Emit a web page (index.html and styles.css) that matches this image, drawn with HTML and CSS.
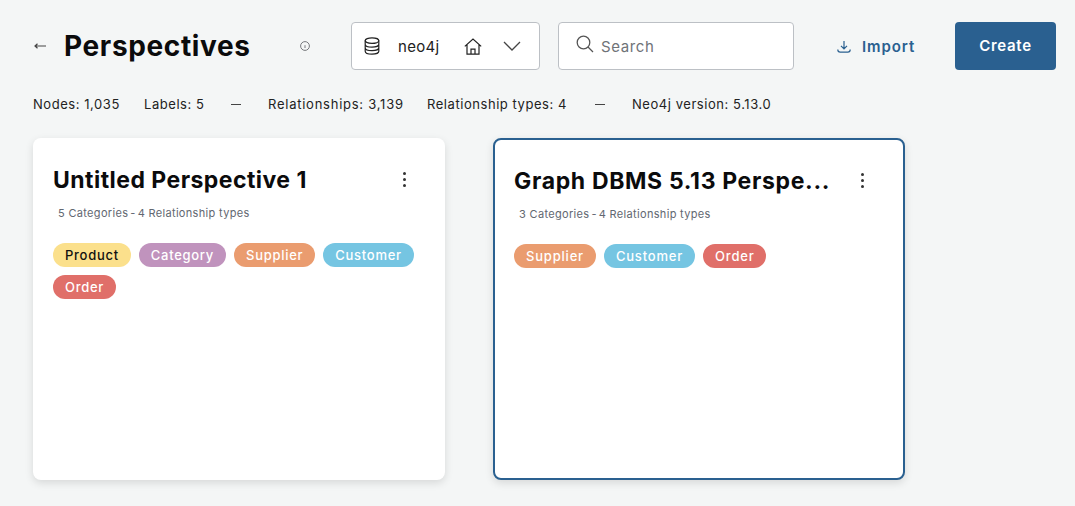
FILE: index.html
```html
<!DOCTYPE html>
<html lang="en">
<head>
  <meta charset="UTF-8">
  <title>Perspectives</title>
  <link rel="stylesheet" href="styles.css">
</head>
<body>
  <header class="topbar">
    <span class="back">
      <svg width="12" height="8" viewBox="0 0 12 8" fill="none" stroke="#444" stroke-width="1.200"><path d="M12 4H1M3.500 1.700 1 4l2.500 2.300"/></svg>
    </span>
    <h1 class="page-title">Perspectives</h1>
    <span class="info">
      <svg width="10" height="10" viewBox="0 0 10 10" fill="none" stroke="#77797d"><circle cx="5" cy="5" r="4.400"/><path d="M5 4.200v2.800"/></svg>
    </span>
    <div class="db-select">
      <svg width="16" height="18" viewBox="0 0 16 18" fill="none" stroke="#222" stroke-width="1.200"><ellipse cx="8" cy="3.600" rx="6.800" ry="2.800"/><path d="M1.200 3.600v10.600c0 1.600 3 2.900 6.800 2.900s6.800-1.300 6.800-2.900V3.600M1.200 7.200c0 1.600 3 2.900 6.800 2.900s6.800-1.300 6.800-2.900M1.200 10.800c0 1.600 3 2.900 6.800 2.900s6.800-1.300 6.800-2.900"/></svg>
      <span class="db-name">neo4j</span>
      <svg class="home" width="18" height="17" viewBox="0 0 18 17" fill="none" stroke="#222" stroke-width="1.200"><path d="M.8 8.400 9 1l8.200 7.400M3 6.800v9.400h12V6.800M7 16.200v-5h4v5"/></svg>
      <svg class="chev" width="18" height="10" viewBox="0 0 18 10" fill="none" stroke="#444" stroke-width="1.300"><path d="M1 1l8 8 8-8"/></svg>
    </div>
    <div class="search">
      <svg width="18" height="18" viewBox="0 0 18 18" fill="none" stroke="#555" stroke-width="1.300"><circle cx="7.500" cy="7.500" r="6.300"/><path d="M12 12l5 5"/></svg>
      <span class="search-text">Search</span>
    </div>
    <button class="btn-import">
      <svg width="14" height="13" viewBox="0 0 14 13" fill="none" stroke="#2a6090" stroke-width="1.200"><path d="M7 1v7.500M4 5.800 7 8.800l3-3M.8 9.500c0 1.600 1 2.700 2.400 2.700h7.600c1.400 0 2.400-1.100 2.400-2.700"/></svg>
      Import
    </button>
    <button class="btn-create">Create</button>
  </header>

  <div class="stats">
    <span class="stat-nodes">Nodes: 1,035</span>
    <span class="stat-labels">Labels: 5</span>
    <span class="dash"></span>
    <span class="stat-rels">Relationships: 3,139</span>
    <span class="stat-types">Relationship types: 4</span>
    <span class="dash"></span>
    <span>Neo4j version: 5.13.0</span>
  </div>

  <main class="cards">
    <section class="card">
      <div class="card-head">
        <h2 class="card-title">Untitled Perspective 1</h2>
        <span class="kebab"><i></i><i></i><i></i></span>
      </div>
      <p class="card-sub"><span>5 Categories</span><span>-</span><span>4 Relationship types</span></p>
      <div class="tags">
        <span class="tag yellow">Product</span>
        <span class="tag purple">Category</span>
        <span class="tag orange">Supplier</span>
        <span class="tag blue">Customer</span>
        <span class="tag red">Order</span>
      </div>
    </section>
    <section class="card selected">
      <div class="card-head">
        <h2 class="card-title">Graph DBMS 5.13 Perspe...</h2>
        <span class="kebab"><i></i><i></i><i></i></span>
      </div>
      <p class="card-sub"><span>3 Categories</span><span>-</span><span>4 Relationship types</span></p>
      <div class="tags">
        <span class="tag orange">Supplier</span>
        <span class="tag blue">Customer</span>
        <span class="tag red">Order</span>
      </div>
    </section>
  </main>
</body>
</html>
```

FILE: styles.css
```css
* { box-sizing: border-box; }
body { margin: 0; height: 506px; overflow: hidden; padding: 22px 19px 0 33px; background: #f4f6f6; font-family: "Inter", "Liberation Sans", sans-serif; color: #1c1c1e; }

.topbar { display: flex; align-items: center; height: 48px; }
.back { display: flex; width: 31px; padding-left: 1px; }
.page-title { margin: 0; width: 236px; font-size: 28px; line-height: 48px; font-weight: 700; color: #0b0b0c; letter-spacing: 0.64px; }
.info { display: flex; width: 51px; }

.db-select { display: flex; align-items: center; width: 189px; height: 48px; padding-left: 12px; background: #fff; border: 1px solid #bcc0c5; border-radius: 4px; }
.db-name { width: 51px; margin-left: 18px; font-size: 15px; letter-spacing: 0.3px; color: #222; }
.home { margin-left: 15px; }
.chev { margin-left: 21px; }

.search { display: flex; align-items: center; width: 236px; height: 48px; margin-left: 18px; padding: 0 0 4px 17px; background: #fff; border: 1px solid #bcc0c5; border-radius: 4px; }
.search-text { margin-left: 7px; padding-top: 5px; font-size: 15px; letter-spacing: 0.6px; color: #6f7378; }

.btn-import { display: flex; align-items: center; gap: 11px; width: 118px; height: 48px; margin-left: 43px; padding: 0; border: 0; background: none; font: 600 15px "Inter", "Liberation Sans", sans-serif; letter-spacing: 0.9px; color: #2a6090; }
.btn-create { width: 101px; height: 48px; padding: 0 0 2px; border: 0; border-radius: 4px; background: #2a6090; font: 600 15px "Inter", "Liberation Sans", sans-serif; letter-spacing: 0.7px; color: #fff; }

.stats { display: flex; align-items: center; height: 20px; margin-top: 24px; font-size: 13px; letter-spacing: 0.55px; color: #222; }
.stat-nodes { width: 111px; }
.stat-labels { width: 87px; }
.dash { width: 10px; height: 1px; margin-right: 27px; background: #444; }
.stat-rels { width: 159px; letter-spacing: 0.75px; }
.stat-types { width: 168px; }

.cards { display: flex; gap: 48px; margin-top: 24px; }
.card { width: 412px; height: 342px; padding: 20px; background: #fff; border-radius: 8px; box-shadow: 0 3px 8px rgba(0, 0, 0, 0.12); }
.card.selected { border: 2px solid #2a6090; padding: 19px; }
.card.selected .card-title { letter-spacing: 0.66px; }
.card.selected .card-head { padding-right: 20px; }
.card.selected .tag { letter-spacing: 0.8px; }

.card-head { display: flex; justify-content: space-between; align-items: center; height: 42px; margin-top: 1px; padding-right: 19px; }
.card-title { margin: 0; font-size: 23px; line-height: 42px; font-weight: 700; letter-spacing: 0.46px; color: #0b0b0c; white-space: nowrap; }
.kebab { display: flex; flex-direction: column; gap: 3px; margin-top: -2px; }
.kebab i { display: block; width: 3px; height: 3px; border-radius: 50%; background: #333; }

.card-sub { display: flex; gap: 2px; margin: 4px 0 0 5px; height: 16px; font-size: 11px; line-height: 16px; letter-spacing: 0.32px; color: #626771; }

.tags { display: flex; flex-wrap: wrap; gap: 8px; margin-top: 22px; }
.tag { height: 24px; padding: 0 12px; border-radius: 12px; font-size: 13px; line-height: 24px; font-weight: 500; letter-spacing: 0.72px; color: #fff; }
.yellow { background: #fbe08c; color: #111; }
.purple { background: #c093bd; }
.orange { background: #ea9c6f; }
.blue { background: #75c5e2; }
.red { background: #e06f69; }
```
